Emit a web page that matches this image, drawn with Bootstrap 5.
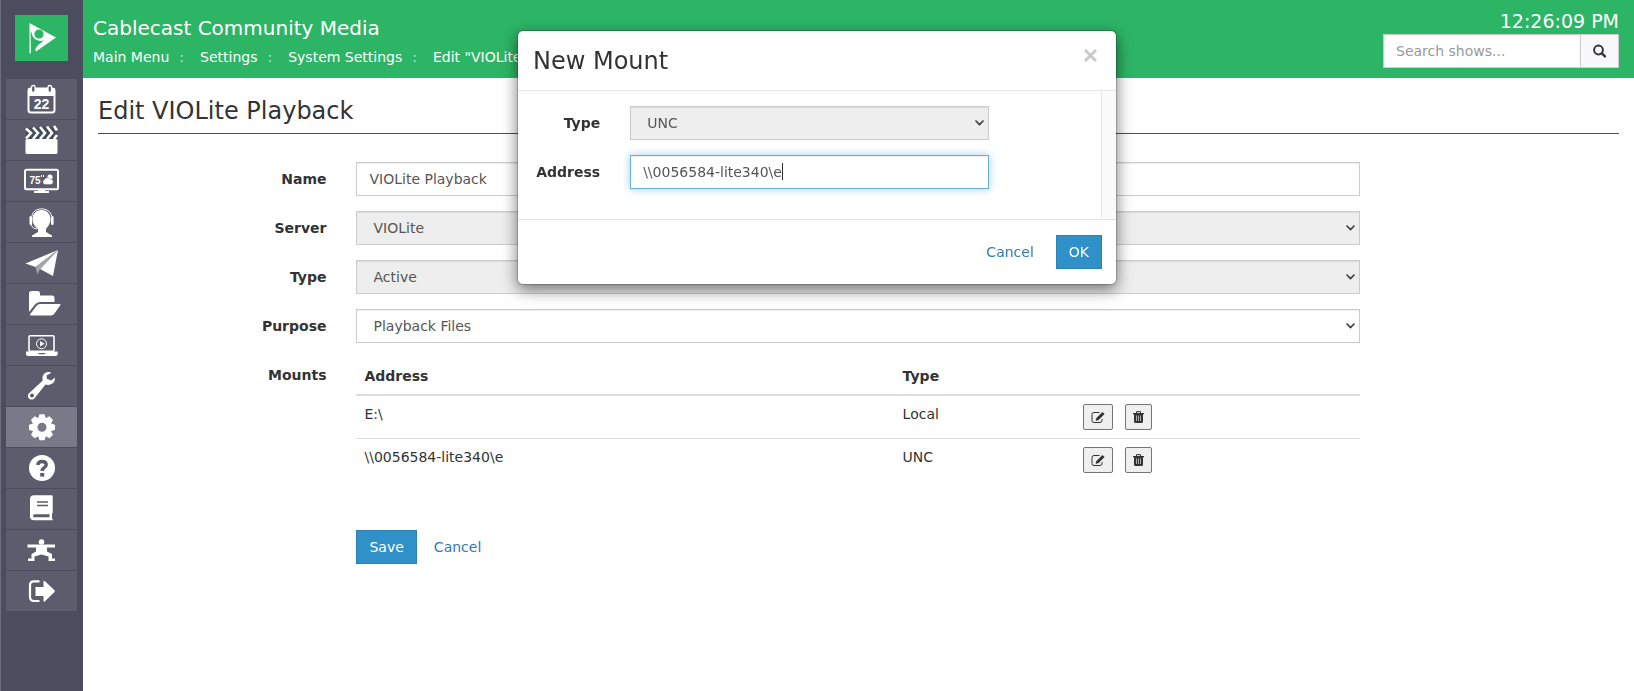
<!DOCTYPE html>
<html lang="en">
<head>
<meta charset="utf-8">
<meta name="viewport" content="width=device-width, initial-scale=1">
<title>Cablecast Community Media</title>
<link href="https://cdn.jsdelivr.net/npm/bootstrap@5.3.0/dist/css/bootstrap.min.css" rel="stylesheet">
<style>
  body { font: 14px/20px Verdana, "DejaVu Sans", sans-serif; color: #333; background: #fff; }
  a { color: #337ab7; text-decoration: none; }

  .side-rail { width: 83px; background: #4b4c5e; border-left: 1px solid #6c6d80; padding: 15px 6px 0 5px; }
  .brand-tile { width: 53px; height: 46px; margin-left: 9px; margin-bottom: 18px; background: #2db566; }
  .rail-list { gap: 1px; }
  .rail-item { height: 40px; background: #5d5c6d; }
  .rail-item.active { background: #7a7987; }
  .rail-item svg, .brand-tile svg { display: block; }

  .top-bar { background: #2db566; color: #fff; height: 78px; padding: 0 15px 0 10px; }
  .site-name { font-size: 20px; line-height: 24px; margin: 16px 0 7px; }
  .crumbs a { color: #fff; }
  .crumbs li + li::before { content: ":"; color: #c4e8d3; padding: 0 16px 0 10px; }
  .clock { font-size: 19px; line-height: 24px; padding-top: 9px; }
  .show-search { width: 236px; margin-top: 1px; margin-left: auto; }

  .form-control, .form-select { font-size: 14px; line-height: 20px; height: 34px; padding: 6px 12px; border: 1px solid #ccc; border-radius: 0; color: #555; box-shadow: inset 0 1px 1px rgba(0,0,0,.075); }
  .form-control::placeholder { color: #999; }
  .form-select { padding-left: 16px; background: #fff url("data:image/svg+xml,%3Csvg xmlns='http://www.w3.org/2000/svg' viewBox='0 0 9 6'%3E%3Cpath d='M1 1l3.5 3.6L8 1' fill='none' stroke='%23444' stroke-width='1.7' stroke-linecap='round' stroke-linejoin='round'/%3E%3C/svg%3E") no-repeat right 4px center / 9px 6px; }
  .form-select:disabled { background-color: #eee; color: #555; }
  .field-active, .field-active:focus { border-color: #66afe9; color: #555; box-shadow: inset 0 1px 1px rgba(0,0,0,.075), 0 0 8px rgba(102,175,233,.6); caret-color: transparent; }
  .btn { font-size: 14px; line-height: 20px; padding: 6px 12px; border-radius: 0; }
  .btn-main { background: #3091c9; border-color: #2b82b5; color: #fff; }
  .btn-find { background: #f8f8fb; border-color: #ccc; color: #333; width: 39px; padding: 0; }
  .btn-link { color: #337ab7; text-decoration: none; }

  .page-title { font-size: 24px; line-height: 28px; margin: 0 15px 28px; padding: 19px 0 8px; border-bottom: 1px solid #4b4c5e; }
  .page-form { padding: 0 15px; }
  .page-form .row, .dialog-form .row { --bs-gutter-x: 30px; margin-bottom: 15px; }
  .field-label { font-weight: 700; text-align: right; padding-top: 7px; white-space: nowrap; }
  .mount-list { margin: 0 0 49px; }
  .mount-list th, .mount-list td { padding: 8px; color: #333; border-bottom: 0; }
  .mount-list tbody tr + tr td { border-top: 1px solid #ddd; }
  .mount-list thead th { border-bottom: 2px solid #ddd; }
  .mount-list .col-address { width: 53.6%; }
  .mount-list .col-kind { width: 18%; }
  .row-tools { gap: 12px; }
  .icon-btn { height: 26px; padding: 0 7px; border: 1px solid #767676; border-radius: 2px; background: #efefef; color: #333; }
  .icon-btn svg { display: block; }

  .mount-dialog { max-width: 600px; margin: 30px auto; }
  .mount-dialog .modal-content { border: 1px solid rgba(0,0,0,.2); border-radius: 6px; box-shadow: 0 5px 15px rgba(0,0,0,.5); color: #333; }
  .mount-dialog .modal-header { padding: 15px 15px 13px; border-color: #e5e5e5; align-items: flex-start; }
  .mount-dialog .modal-title { font-size: 24px; line-height: 31px; }
  .close-x { border: 0; background: none; padding: 0; width: 17px; }
  .close-x svg { display: block; }
  .dialog-scroll { padding: 15px; border-right: 1px solid #e8e8e8; }
  .scroll-track { width: 14px; background: #fafafa; }
  .mount-dialog .modal-footer { padding: 15px 14px; border-color: #e5e5e5; gap: 9px; }
  .mount-dialog .modal-footer > * { margin: 0; }
  .text-caret { position: absolute; left: 152px; top: 8px; width: 1px; height: 17px; background: #333; }
</style>
</head>
<body>
<div class="d-flex min-vh-100">

  <nav class="side-rail flex-shrink-0" aria-label="Main">
    <a href="#" class="brand-tile d-block" aria-label="Home">
      <svg width="53" height="46" fill="#fff"><path d="M14.500 8L41 22.500 21 36.500C19.500 34 21 31 29 25.500 23 27 17 24 15.800 17V38.500H14.500Z"/><circle cx="24" cy="19" r="4.600" fill="#2db566"/><path d="M15.800 15C17 20 18 24 22 26.500L15.800 27Z" fill="#2db566"/></svg>
    </a>
    <div class="rail-list d-flex flex-column">
      <a href="#" class="rail-item" aria-label="Schedule"><svg width="71" height="40"><path d="M24.500 9.500H46Q48.500 9.500 48.500 12V31Q48.500 33.500 46 33.500H25Q22.500 33.500 22.500 31V12Q22.500 9.500 24.500 9.500Z" fill="none" stroke="#fff" stroke-width="2"/><path d="M22 9H49V17H22Z" fill="#fff"/><g fill="#5d5c6d" stroke="#fff" stroke-width="1.300"><rect x="25.500" y="6.500" width="3.600" height="7" rx="1.800"/><rect x="42" y="6.500" width="3.600" height="7" rx="1.800"/></g><text x="35.500" y="30" text-anchor="middle" font-family="Liberation Sans, sans-serif" font-weight="700" font-size="14" fill="#fff">22</text></svg></a>
      <a href="#" class="rail-item" aria-label="Shows"><svg width="71" height="40"><path d="M20 8L51 6.500V19H20Z" fill="#454c59"/><g fill="none" stroke="#fff" stroke-width="2.600"><path d="M20 8.500L25 13 20 18.500M27 7.500L32 13 27 19M34 7L39 13 34 19M41 6.500L46 13 41 19M48 6L51 10.500M51 15L48 19"/></g><rect x="19.500" y="19" width="32" height="15" rx="1.500" fill="#fff"/></svg></a>
      <a href="#" class="rail-item" aria-label="Bulletins"><svg width="71" height="40" fill="#fff"><rect x="19" y="8.800" width="33" height="19.500" rx="1.500" fill="none" stroke="#fff" stroke-width="2"/><path d="M32 29H39V30H43V32H28V30H32Z"/><text x="23.500" y="23" font-family="Liberation Sans, sans-serif" font-weight="700" font-size="10">75</text><path d="M35 14h1v2h-1zM37 14h1v2h-1z"/><circle cx="44" cy="16" r="2.600"/><path d="M39 23.500a2.600 2.600 0 0 1-.5-5 3.200 3.200 0 0 1 5.500-.5 2.800 2.800 0 0 1 1 5.500Z" stroke="#5d5c6d" stroke-width=".4"/></svg></a>
      <a href="#" class="rail-item" aria-label="Support"><svg width="71" height="40" fill="#fff"><path d="M35.500 8C41 8 44.500 12 44.500 17 44.500 22 41.500 25 40 27V30L46 33.500V35H26V33.500L32 30V27C29.500 25 26.500 22 26.500 17 26.500 12 30 8 35.500 8Z"/><path d="M26 14C27 4.500 44 4.500 45.500 14" fill="none" stroke="#fff"/><rect x="23.500" y="14" width="2.600" height="9" rx="1.300"/><rect x="45" y="14" width="2.600" height="9" rx="1.300"/><path d="M25 23Q27 27 31 27" fill="none" stroke="#fff"/></svg></a>
      <a href="#" class="rail-item" aria-label="Publish"><svg width="71" height="40" fill="#fff"><path d="M52 7L19.500 20.500 29.500 24Z"/><path d="M52 7L34 26 47 33Z"/><path d="M52 7L29.500 24 31.500 31.500 34 26Z" fill="#a4a4af"/></svg></a>
      <a href="#" class="rail-item" aria-label="Files"><svg width="71" height="40" fill="#fff"><path d="M23 9.500Q23 7 25.500 7H31.500Q34 7 34 9.500V11.500H46Q48.500 11.500 48.500 14V18H34Q31 18 29 20.500L23 28Z"/><path d="M34 20H54Q55 20 54.400 21L48.500 29.500Q47 31.500 45 31.500H25Q23.500 31.500 24.300 30L30.500 22Q32 20 34 20Z"/></svg></a>
      <a href="#" class="rail-item" aria-label="Player"><svg width="71" height="40" fill="#fff"><rect x="23" y="10.800" width="25" height="15.500" rx="1" fill="none" stroke="#fff" stroke-width="1.600"/><path d="M20 26.500H51.700V29Q51.700 31 49.500 31H22Q20 31 20 29Z"/><path d="M32 28H39.500L38.500 29.300H33Z" fill="#5d5c6d"/><circle cx="35.500" cy="18.800" r="5" fill="none" stroke="#fff" stroke-width="1"/><path d="M34 16L38.500 18.800 34 21.600Z"/></svg></a>
      <a href="#" class="rail-item" aria-label="Tools"><svg width="71" height="40" fill="#fff"><path d="M48.500 11.500L45.500 14.500 41 13 40.500 9.500 45.500 6.800C43 5.500 40 6 38 8 36.500 9.800 36 12 36.800 14.500L22.800 27.500C21.300 29.500 21.800 31.500 23.200 32.700 25 34 27.300 33.700 28.500 32.300L39.500 18.500C42 19.500 45.500 18.500 47 17 48.800 15.300 49.300 13.300 48.500 11.500Z"/><circle cx="26" cy="29.500" r="2" fill="#5d5c6d"/></svg></a>
      <a href="#" class="rail-item active" aria-label="Settings"><svg width="71" height="40"><g transform="translate(36 20.300)" fill="#fff"><circle r="10"/><g id="tooth"><path d="M-2.600-13H2.600L4-8H-4ZM-2.600 13H2.600L4 8H-4Z"/><path d="M-13-2.600V2.600L-8 4V-4ZM13-2.600V2.600L8 4V-4Z"/></g><use href="#tooth" transform="rotate(45)"/><circle r="4.500" fill="#7a7987"/></g></svg></a>
      <a href="#" class="rail-item" aria-label="Help"><svg width="71" height="40"><circle cx="36" cy="20" r="13" fill="#fff"/><path d="M31.800 17Q32.300 13.500 36 13.500 40.200 13.500 40.200 16.700 40.200 18.500 38 19.800 36.200 21 36.200 23" fill="none" stroke="#5d5c6d" stroke-width="3.400"/><rect x="34.200" y="25" width="4" height="3.600" fill="#5d5c6d"/></svg></a>
      <a href="#" class="rail-item" aria-label="Manual"><svg width="71" height="40"><path d="M28 6.300H45.500Q46.700 6.300 46.700 7.500V23.500L46 25V29.500L46.700 30.300V31.300H28Q24 31.300 24 27.500V10.300Q24 6.300 28 6.300Z" fill="#fff"/><path d="M31 13H42M31 16.500H42" stroke="#5d5c6d" stroke-width="1.300"/><path d="M28.500 25.300H43.500V28.300H28.500Q27 28.300 27 26.800T28.500 25.300Z" fill="#5d5c6d"/></svg></a>
      <a href="#" class="rail-item" aria-label="Community"><svg width="71" height="40" fill="#fff"><circle cx="35.500" cy="12" r="2.800"/><path d="M21.500 14.500H49V17.500H41V21.500L46 24V28.500H49V31H42.500V26.500L35.500 24.500 28.500 26.500V31H22V28.500H25.500V24L30 21.500V17.500H21.500Z"/></svg></a>
      <a href="#" class="rail-item" aria-label="Sign out"><svg width="71" height="40"><path d="M33.500 10.300H28Q24 10.300 24 14.300V26Q24 30 28 30H33.500" fill="none" stroke="#fff" stroke-width="2.200"/><path d="M29.500 16H37.500V10.500Q37.500 9 39 10.200L48.500 19.300Q49.300 20.200 48.500 21L39 30.200Q37.500 31.500 37.500 30V25H29.500Z" fill="#fff"/></svg></a>
    </div>
  </nav>

  <div class="flex-grow-1">
    <header class="top-bar d-flex justify-content-between">
      <div>
        <h1 class="site-name fw-normal">Cablecast Community Media</h1>
        <ol class="crumbs list-unstyled d-flex mb-0 text-nowrap">
          <li><a href="#">Main Menu</a></li>
          <li><a href="#">Settings</a></li>
          <li><a href="#">System Settings</a></li>
          <li><a href="#">Edit "VIOLite"</a></li>
        </ol>
      </div>
      <div class="text-end">
        <div class="clock">12:26:09 PM</div>
        <form class="input-group show-search">
          <input type="search" class="form-control" placeholder="Search shows..." aria-label="Search shows">
          <button type="button" class="btn btn-find d-flex align-items-center justify-content-center" aria-label="Search"><svg width="13" height="14" viewBox="0 0 13 14" fill="none" stroke="#333" stroke-width="2"><circle cx="5.500" cy="6" r="4.400"/><path d="M8.800 9.300L12 12.400" stroke-width="2.400" stroke-linecap="round"/></svg></button>
        </form>
      </div>
    </header>

    <main>
      <h2 class="page-title fw-normal">Edit VIOLite Playback</h2>
      <form class="page-form">
        <div class="row">
          <label class="col-2 field-label" for="name">Name</label>
          <div class="col-8"><input id="name" class="form-control" value="VIOLite Playback"></div>
        </div>
        <div class="row">
          <label class="col-2 field-label" for="server">Server</label>
          <div class="col-8"><select id="server" class="form-select" disabled><option>VIOLite</option></select></div>
        </div>
        <div class="row">
          <label class="col-2 field-label" for="kind">Type</label>
          <div class="col-8"><select id="kind" class="form-select" disabled><option>Active</option></select></div>
        </div>
        <div class="row">
          <label class="col-2 field-label" for="purpose">Purpose</label>
          <div class="col-8"><select id="purpose" class="form-select"><option>Playback Files</option></select></div>
        </div>
        <div class="row mb-0">
          <div class="col-2 field-label" id="mounts-label">Mounts</div>
          <div class="col-8">
            <table class="table mount-list" aria-labelledby="mounts-label">
              <thead>
                <tr><th class="col-address">Address</th><th class="col-kind">Type</th><th></th></tr>
              </thead>
              <tbody>
                <tr>
                  <td>E:\</td><td>Local</td>
                  <td><div class="row-tools d-flex">
                    <button type="button" class="icon-btn" aria-label="Edit"><svg width="14" height="12" fill="none" stroke="#333"><path d="M8.500 1.500H3Q1 1.500 1 3.500V9.500Q1 11.500 3 11.500H9Q11 11.500 11 9.500V8"/><path d="M6 8.500L12.500 2" stroke-width="3"/><path d="M5 9.500L6.500 8" stroke-width="1.500"/></svg></button>
                    <button type="button" class="icon-btn" aria-label="Delete"><svg width="11" height="12"><path d="M3.500 2V.6H7.500V2" fill="none" stroke="#333"/><path d="M0 2H11V3.300H10V10.500Q10 12 8.500 12H2.500Q1 12 1 10.500V3.300H0Z" fill="#333"/><path d="M3.500 4.500V10M5.500 4.500V10M7.500 4.500V10" stroke="#bbb" stroke-width=".9"/></svg></button>
                  </div></td>
                </tr>
                <tr>
                  <td>\\0056584-lite340\e</td><td>UNC</td>
                  <td><div class="row-tools d-flex">
                    <button type="button" class="icon-btn" aria-label="Edit"><svg width="14" height="12" fill="none" stroke="#333"><path d="M8.500 1.500H3Q1 1.500 1 3.500V9.500Q1 11.500 3 11.500H9Q11 11.500 11 9.500V8"/><path d="M6 8.500L12.500 2" stroke-width="3"/><path d="M5 9.500L6.500 8" stroke-width="1.500"/></svg></button>
                    <button type="button" class="icon-btn" aria-label="Delete"><svg width="11" height="12"><path d="M3.500 2V.6H7.500V2" fill="none" stroke="#333"/><path d="M0 2H11V3.300H10V10.500Q10 12 8.500 12H2.500Q1 12 1 10.500V3.300H0Z" fill="#333"/><path d="M3.500 4.500V10M5.500 4.500V10M7.500 4.500V10" stroke="#bbb" stroke-width=".9"/></svg></button>
                  </div></td>
                </tr>
              </tbody>
            </table>
          </div>
        </div>
        <div class="row">
          <div class="col-8 offset-2 d-flex gap-1"><button type="button" class="btn btn-main">Save</button><button type="button" class="btn btn-link">Cancel</button></div>
        </div>
      </form>
    </main>
  </div>
</div>

<div class="modal d-block" role="dialog" aria-labelledby="dialog-title">
  <div class="modal-dialog mount-dialog">
    <div class="modal-content">
      <div class="modal-header">
        <h3 class="modal-title fw-normal" id="dialog-title">New Mount</h3>
        <button type="button" class="close-x" aria-label="Close"><svg width="13" height="20" stroke="#c9c9c9" stroke-width="3"><path d="M1 4L12 15M12 4L1 15"/></svg></button>
      </div>
      <div class="d-flex">
        <form class="dialog-scroll dialog-form flex-grow-1">
          <div class="row">
            <label class="col-2 field-label" for="mount-type">Type</label>
            <div class="col-8"><select id="mount-type" class="form-select" disabled><option>UNC</option></select></div>
          </div>
          <div class="row">
            <label class="col-2 field-label d-flex justify-content-end" for="mount-address">Address</label>
            <div class="col-8"><div class="position-relative"><input id="mount-address" class="form-control field-active" value="\\0056584-lite340\e"><span class="text-caret"></span></div></div>
          </div>
        </form>
        <div class="scroll-track"></div>
      </div>
      <div class="modal-footer">
        <button type="button" class="btn btn-link">Cancel</button>
        <button type="button" class="btn btn-main">OK</button>
      </div>
    </div>
  </div>
</div>
<script src="https://cdn.jsdelivr.net/npm/bootstrap@5.3.0/dist/js/bootstrap.bundle.min.js"></script>
</body>
</html>
